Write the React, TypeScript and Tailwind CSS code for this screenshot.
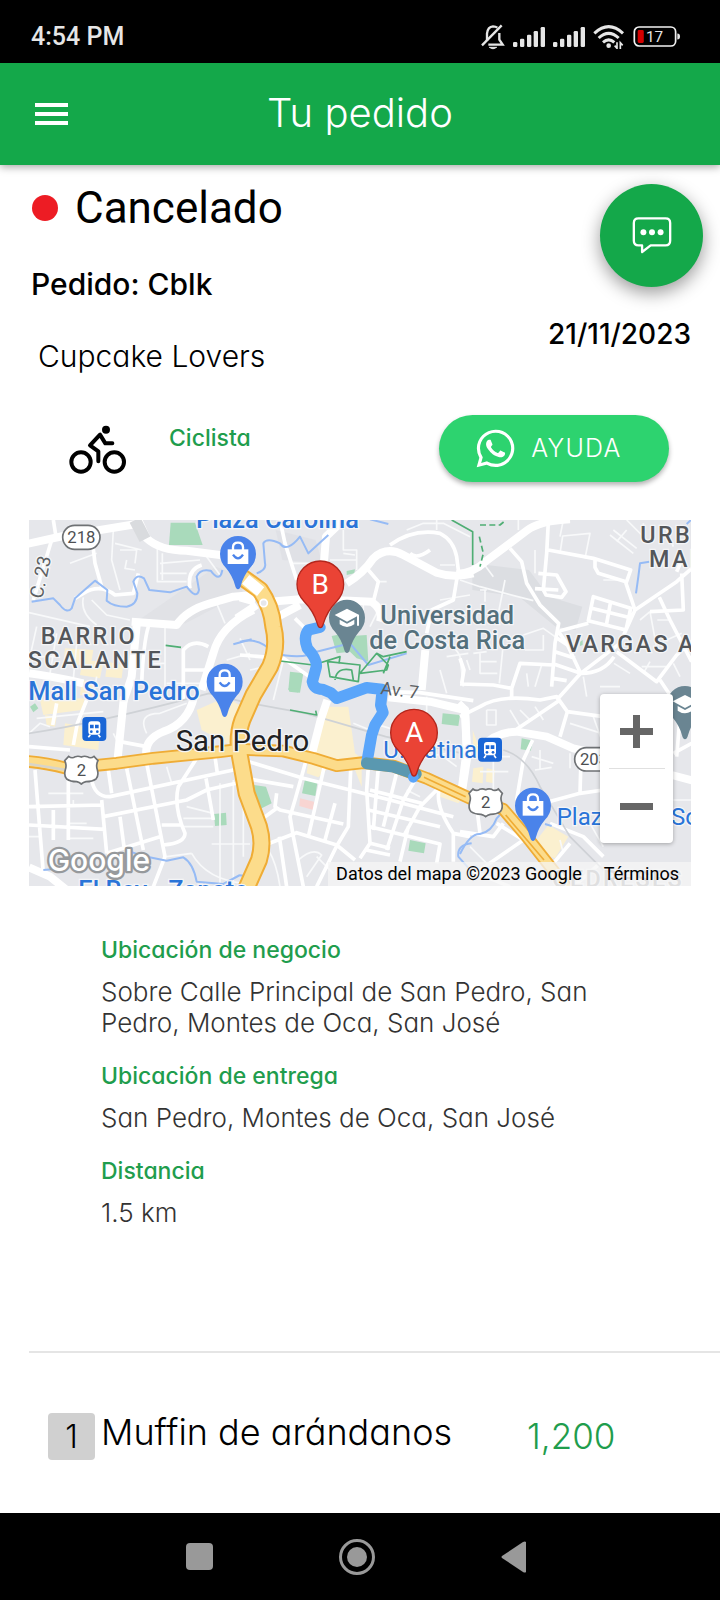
import React from "react";
import { IoLogoWhatsapp } from "react-icons/io5";

type Tile = {
  x: number;
  y: number;
  major: string;
  mid: string;
  minor: string;
  water: string;
  park: string;
  shops: string;
};

/* Street data of the map, split in six tiles. */
const tiles: Tile[] = [
  {
    x: -27,
    y: -30,
    major:
      "M20 102L130 78L240 60L350 42M355 30L380 85Q420 122 500 122L600 135L700 158M335 335L470 345Q500 300 570 280L640 260L700 255M700 300Q600 350 580 430L545 540M350 345L335 500L310 575M27 490Q100 500 190 520",
    mid: "M95 90L40 270M215 75L225 160L245 230M385 350Q370 400 365 520M490 570V420Q520 385 565 410M490 480H565M165 265L190 250Q240 220 285 255L340 250L355 190M510 235Q500 180 545 165M100 30L108 80",
    minor:
      "M280 60L275 150L300 240M300 120H350L345 160M285 100L365 120M320 150L315 175L345 180M412 110V215H500M427 130V210M420 160L540 150M420 190H500M560 140L600 195M190 262Q180 310 230 345M215 270Q245 300 260 315L330 330M27 308L210 350M150 160L230 130M435 350V560M385 460H435M440 520H540M590 280L615 340M660 385L690 450M50 350L30 440M110 370L90 490M27 440H120M170 400L155 560M230 500L220 560M620 450L690 430",
    water:
      "M35 275L100 265L120 285Q140 312 155 295L165 265L225 212L262 240L260 272Q280 290 320 290Q352 285 352 250L340 215Q350 190 372 205L388 240L450 247L500 230Q530 270 537 240L530 200Q540 175 572 182Q600 220 607 180M640 403L695 388",
    park: "M452 38L525 38L548 105L447 105Z",
    shops:
      "M135 415L220 420L212 470L130 458ZM188 450L250 455L240 505L180 495ZM262 455L310 465L305 505L256 500ZM330 420L365 420L350 470L325 465ZM185 510L225 520L220 560L180 555Z",
  },
  {
    x: 633,
    y: -30,
    major:
      "M310 30L258 80L250 180M320 220Q370 190 400 145Q440 108 490 135L590 188Q640 205 700 190M90 275L180 268Q260 270 395 275Q430 300 420 335M105 325L180 285M0 262L45 275M-10 325L50 285M556 420L545 540",
    mid: "M120 30L135 100L170 210M165 325L200 360M385 180L415 215L400 275M450 105Q520 55 600 70Q640 90 650 140L655 180L640 270L575 300L560 370M0 435L130 445L215 505M445 545L540 548L700 572M510 130Q530 150 570 120",
    minor:
      "M150 160H210M310 60V120H350V180M270 150H350M415 215H440M310 130L345 135M600 165H645M500 60L550 40H610L690 80M600 270L690 255M575 405Q640 390 660 440L670 530M620 440L685 430M600 480L620 550M130 450L100 570M410 310L390 350M590 60V30M30 480L80 470M370 280V330",
    water:
      "M50 190Q80 180 75 160L70 100Q80 82 120 100Q140 130 180 80L205 130L265 75M390 28L445 42M0 395Q60 380 100 430Q190 450 230 425L330 400L385 465L500 430",
    park: "M320 183L345 178L343 190L320 195ZM150 485L190 490L180 548L145 540ZM275 378L305 372L330 405L335 378L380 375L385 455L350 445L330 425L290 430Z",
    shops: "",
  },
  {
    x: 1293,
    y: -30,
    major: "M-10 192Q40 190 80 152L200 62Q240 32 330 28",
    mid: "M150 115L185 155L200 220L240 285L296 340L285 400L275 530M265 35L260 130L250 240L258 255L305 262L318 245L290 195L235 190M225 236L295 240M265 120L400 145L512 180L498 220L525 300L650 215L695 175M405 150V172L415 190L498 215M400 260L512 295L498 360L385 332ZM395 295L505 322M452 275L440 340M300 362L385 340M525 300L480 400L362 490L290 570M362 490L320 400L292 360M285 380L330 410M285 425L345 445M275 460L362 490M278 505L320 512M598 262L630 330L695 455M570 305L670 300L665 190M470 425L590 515L650 435L700 390M0 522L100 525L155 535L180 460L280 465M0 445L12 480L5 520M155 530V570M362 490Q430 490 462 440M600 510L640 570M650 185L665 150",
    minor:
      "M175 30V60M70 160L100 200M0 210L60 230L220 272M75 240V275M60 240H80M135 210L115 310M225 120V190M300 130L308 78L390 70L375 145M300 80L310 30M450 75L520 130M460 60L530 115M500 30L560 90M470 95L500 60M550 40V90M600 50V100M620 60L640 110M430 210H475M570 305L592 425M592 330H625M620 390L665 370M540 330L570 305M130 400L118 520M60 430V490H112M60 455H110M40 430L80 425M200 490L205 530M245 465L225 530M420 530H480M545 470H620M550 490L570 455M640 460L660 500M462 460L510 490M250 375V420H195M190 375L250 355L285 380M30 480L20 450M370 500L380 560",
    water: "M568 155L540 160L535 200L528 250M680 42L695 28",
    park: "M360 395L368 390L368 405L360 408Z",
    shops: "",
  },
  {
    x: -27,
    y: 510,
    major:
      "M312 20L292 215M380 200Q370 150 430 125Q505 100 522 20M27 532L90 560L140 600",
    mid: "M27 350L250 345M27 405L255 418M27 170L150 180M45 240L70 550M100 360V450M145 265V450M215 270Q225 322 270 320L640 240M250 380L500 330L560 300L690 270M265 240L275 310M245 330L260 490M320 235L370 480M380 220L435 500L400 590M300 380L312 470M260 490L420 440M530 205L475 290Q460 350 495 430Q495 460 430 465M425 405H485M585 200L592 250M558 265L580 390M160 165L172 100L200 30M110 40L98 105M300 155L380 170",
    minor:
      "M50 85L250 65M280 130L300 170M380 130Q350 70 420 70L500 40M85 310H190M150 400H200M600 280V580M640 270V590M490 385H580M490 410H580M515 490Q560 570 675 580M575 462H690M440 230L455 280M27 440H60M145 445H220M160 330V350M500 350L580 370M440 500L515 490M27 130L60 100L90 110",
    water:
      "M70 540L130 535M330 485L370 498L440 512L490 502Q520 520 530 575L610 582L660 555",
    park: "M30 50L45 40L55 55L40 67ZM582 372L618 368L620 405L585 408Z",
    shops:
      "M60 30L195 25L185 60L70 75ZM135 100L240 120L235 180L130 165ZM75 75L110 80L105 110L80 105ZM530 60L620 20L680 60L640 170L545 120Z",
  },
  {
    x: 633,
    y: 510,
    major: "M262 30L242 90L215 195M445 22L570 35L675 60L680 180L665 300",
    mid: "M10 210L190 265L450 330L640 380M0 262L160 290M200 205L165 330L150 380L160 440L190 590M255 220L205 440M332 240L325 410L290 468L230 590M110 310L105 350L120 360L310 402M55 395L110 355M75 465L170 428L290 465L345 510M285 340L255 450M385 230L380 300L390 460L360 505M415 230L400 420M472 240L430 410M390 300L545 340M385 360L600 410M525 270L490 330L440 480M390 410L600 462L590 520M600 290L540 350L490 440M600 290Q580 340 640 430V515M640 430L690 440M385 458L450 475M378 480L450 495M505 410L480 515M118 440L140 590",
    minor:
      "M30 150L110 170M400 100L600 160M560 200L620 190M85 480Q110 520 120 590M175 510Q220 470 245 495L200 560M230 500L280 550M10 300V500M500 300L540 320M560 20V80M610 200L650 230M340 100L390 120",
    water: "M695 460Q650 465 655 500L695 545M0 556L15 558",
    park: "M195 268L233 272L226 318L186 310ZM40 285L78 290L95 340L50 362ZM608 70L660 75L655 108L605 102ZM510 450L557 460L552 490L505 482ZM145 -5L180 -5L175 8L148 5Z",
    shops:
      "M265 50L325 50L345 190L365 205L365 290L345 240L300 240L220 195ZM205 210L270 230L235 262L200 250ZM555 245L680 310L655 340L600 320Z",
  },
  {
    x: 1293,
    y: 510,
    major:
      "M-5 40L15 60L22 200L5 310M60 175Q110 125 170 125L260 140L340 175L430 195M635 255L700 272",
    mid: "M0 80L60 50Q120 12 240 30L290 20L322 65L430 80M322 65L300 140M170 118L300 30M218 150L190 210L170 330M362 240L360 310L250 340M360 310L430 300M110 400L190 450M0 425L100 440L130 400M190 450L60 540M270 400L370 440L430 500M50 350L60 430M340 590L420 520M640 190L695 160M660 80L650 200M30 540L150 590M280 520L330 460",
    minor:
      "M100 200V320M60 200H150M60 245H145M215 200L280 220M225 240L275 232M240 180V240M400 80L425 150M330 100L425 130M80 60V105H108V60H80M150 60L180 110M225 50L250 90M30 470L80 520M300 450L310 490M390 400L430 470M640 330H695M180 60L210 90M120 150V200M330 190V235",
    water: "M0 492Q30 430 60 432Q95 425 110 385L135 358M255 402L275 408",
    park: "M185 145L220 152L212 182L182 178Z",
    shops:
      "M40 235L70 230L68 280L36 275ZM80 235L105 240L100 280L78 275ZM38 120L60 180L40 190ZM230 450L265 405L325 440L285 505L245 490ZM270 540L320 590L290 590Z",
  },
];

const northSouth =
  "M640 172L693 210Q728 260 733 320Q748 380 723 440L673 525L640 600Q622 650 633 710L653 820L690 920Q705 970 690 1020L650 1110";
const eastWest =
  "M-10 724Q50 728 113 745L263 730L373 715L573 695L633 688L763 693L853 715L923 737L1003 728L1093 738L1193 775L1323 835L1423 868L1493 950L1615 1105";

function Bag() {
  return (
    <g>
      <path d="M-31 -14H31V30H-31Z" fill="#fff" />
      <path d="M-15 -10V-20Q-15 -34 0 -34Q15 -34 15 -20V-10" fill="none" stroke="#fff" strokeWidth="7" />
      <path d="M-15 2Q0 24 15 2" fill="none" stroke="#4a83ea" strokeWidth="7" />
    </g>
  );
}

function Cap() {
  return (
    <g fill="#fff">
      <path d="M0 -27L37 -8L0 12L-37 -8Z" />
      <path d="M-22 6L0 18L22 6V20Q0 36 -22 20Z" />
      <path d="M30 -8H36V24H30Z" />
    </g>
  );
}

function PlacePin({ x, y, fill, children }: { x: number; y: number; fill: string; children: React.ReactNode }) {
  return (
    <g transform={`translate(${x} ${y})`}>
      <path
        d="M0 106Q-6 106 -9 94Q-16 66 -36 42Q-54 24 -54 0A54 54 0 0 1 54 0Q54 24 36 42Q16 66 9 94Q6 106 0 106Z"
        fill={fill}
      />
      {children}
    </g>
  );
}

function RedPin({ x, y, label }: { x: number; y: number; label: string }) {
  return (
    <g transform={`translate(${x} ${y})`}>
      <path
        d="M0 130Q-6 130 -9 118Q-20 80 -48 52Q-70 30 -70 0A70 70 0 0 1 70 0Q70 30 48 52Q20 80 9 118Q6 130 0 130Z"
        fill="#ea4335"
        stroke="#b3261c"
        strokeWidth="4"
      />
      <text y="29" textAnchor="middle" fontSize="84" fill="#fff">
        {label}
      </text>
    </g>
  );
}

function Station({ x, y }: { x: number; y: number }) {
  return (
    <g transform={`translate(${x} ${y})`}>
      <rect width="72" height="72" rx="12" fill="#1a66d6" />
      <rect x="18" y="13" width="36" height="40" rx="9" fill="#fff" />
      <path d="M23 23H34V34H23ZM38 23H49V34H38Z" fill="#1a66d6" />
      <circle cx="27" cy="44" r="4" fill="#1a66d6" />
      <circle cx="45" cy="44" r="4" fill="#1a66d6" />
      <path d="M24 53L18 61M48 53L54 61" stroke="#fff" strokeWidth="5" />
    </g>
  );
}

function RouteShield({ x, y }: { x: number; y: number }) {
  return (
    <g transform={`translate(${x} ${y})`}>
      <path
        d="M14 2Q24 10 34 3Q43 0 52 4Q61 0 70 3Q80 10 90 2L102 15Q95 28 100 42Q105 60 96 70Q85 78 66 78Q58 80 52 85Q46 80 38 78Q19 78 8 70Q-1 60 4 42Q9 28 2 15Z"
        fill="#fff"
        stroke="#6f7275"
        strokeWidth="5"
      />
      <text x="52" y="60" textAnchor="middle" fontSize="50" fill="#4d4f52">
        2
      </text>
    </g>
  );
}

function MapDrawing() {
  const halo = { stroke: "#f4f5f7", strokeWidth: 8, paintOrder: "stroke" } as const;
  return (
    <svg
      viewBox="0 0 1986 1098"
      preserveAspectRatio="xMidYMid slice"
      role="img"
      aria-label="Mapa de la ruta en San Pedro"
      className="block h-full w-full font-[Roboto,sans-serif]"
    >
      <rect width="1986" height="1098" fill="#e6e7eb" />
      <g fill="#dcdee2">
        <path d="M1330 130L1500 150L1560 230L1660 260L1640 330L1580 320L1470 230L1330 210Z" />
        <path d="M740 30L860 60L880 130L760 120Z" opacity=".6" />
        <path d="M560 140L640 170L640 220L470 310L330 300Z" opacity=".5" />
      </g>
      {tiles.map((t, i) => (
        <g key={i} transform={`translate(${t.x} ${t.y})`}>
          <path d={t.shops} fill="#fbf0cf" />
          <path d={t.park} fill="#a9dabb" />
        </g>
      ))}
      <path d="M813 835L855 845L853 870L811 858Z" fill="#f8d5d2" />
      {tiles.map((t, i) => (
        <g key={i} transform={`translate(${t.x} ${t.y})`} fill="none" stroke="#fff" strokeLinejoin="round">
          <path d={t.minor} strokeWidth="5" stroke="#f8f9fa" />
          <path d={t.mid} strokeWidth="11" />
        </g>
      ))}
      <g fill="none" stroke="#cfd2d6" strokeWidth="5">
        <path d="M0 640Q200 610 540 520L640 545L830 580L1070 650L1300 700" />
        <path d="M1423 690Q1493 710 1533 800L1623 950L1743 1070" />
      </g>
      {tiles.map((t, i) => (
        <g key={i} transform={`translate(${t.x} ${t.y})`} fill="none" strokeLinejoin="round">
          <path d={t.major} strokeWidth="24" stroke="#fff" />
          <path d={t.water} strokeWidth="6" stroke="#96bbf5" />
        </g>
      ))}
      <path d="M318 0L348 58" stroke="#d9dbde" strokeWidth="36" />
      <g fill="none" stroke="#4fae74" strokeWidth="5" strokeLinejoin="round">
        <path d="M410 376L456 382M753 423L853 435L933 410L930 430" />
        <path d="M895 420L903 470L988 485L993 435L898 425M918 480Q923 440 968 450L973 480M993 460L1073 450L1078 435L1043 400L993 460M1043 400L1063 410L1133 395M1063 460L1083 410" />
        <path d="M1268 0L1331 35V135M783 570L863 585L860 572" />
        <path d="M1353 15H1413L1431 0M1351 50L1363 100L1353 140" strokeDasharray="18 10" />
      </g>
      <g fill="none" strokeLinejoin="round">
        <path d={northSouth} stroke="#efac35" strokeWidth="54" />
        <path d={eastWest} stroke="#efac35" strokeWidth="38" />
        <path d={northSouth} stroke="#fcdc8b" strokeWidth="42" />
        <path d={eastWest} stroke="#fcdc8b" strokeWidth="27" />
        <path d="M650 178L695 215" stroke="#fff" strokeWidth="34" />
        <path d="M0 732L113 750" stroke="#d8d4c8" strokeWidth="8" />
        <path d="M1185 772L1310 830M1430 885L1545 1020" stroke="#efac35" strokeWidth="5" />
        <circle cx="704" cy="249" r="11" fill="#e6e7eb" stroke="#fff" strokeWidth="5" />
      </g>
      <g fill="none" strokeLinejoin="round" strokeLinecap="round">
        <path
          d="M873 322L838 330Q822 350 835 385Q864 415 862 440L850 485Q855 508 880 508L905 518L923 535L1013 503L1060 508L1055 555L1062 578L1038 615L1028 645L1014 725"
          stroke="#5aa5fa"
          strokeWidth="34"
        />
        <path d="M1014 730L1093 740L1160 762" stroke="#5a98b0" strokeWidth="36" />
        <circle cx="1153" cy="772" r="10" fill="#5aa5fa" stroke="#5aa5fa" strokeWidth="12" />
      </g>

      <g fontSize="70" fill="#53565a" className="font-medium tracking-widest" {...halo}>
        <text x="35" y="372">BARRIO</text>
        <text x="-4" y="444">SCALANTE</text>
        <text x="1611" y="395">VARGAS ARAYA</text>
        <text x="1834" y="68">URB.</text>
        <text x="1860" y="140">MARÍA</text>
        <text x="1570" y="1100" fill="#9a9c9f">CEDRESES</text>
      </g>
      <g fontSize="76" fill="#2a74d8" className="font-medium" {...halo}>
        <text x="501" y="24">Plaza Carolina</text>
        <text x="-2" y="540">Mall San Pedro</text>
        <text x="148" y="1137">El Rey - Zapote</text>
      </g>
      <g fontSize="72" fill="#2a74d8" {...halo}>
        <text x="1063" y="715">U. Latina</text>
        <text x="1583" y="914">Plaza del</text>
        <text x="1926" y="914">Sol</text>
      </g>
      <g fontSize="76" fill="#54707c" className="font-medium" {...halo}>
        <text x="1054" y="311">Universidad</text>
        <text x="1021" y="388">de Costa Rica</text>
      </g>
      <text x="440" y="692" fontSize="88" fill="#202124" {...halo}>
        San Pedro
      </text>
      <text fontSize="56" fill="#5c5f62" transform="translate(40 238) rotate(-78)" {...halo}>
        C. 23
      </text>
      <text fontSize="54" fill="#5c5f62" transform="translate(1053 522) rotate(7)">
        Av. 7
      </text>
      <g fill="#fff" stroke="#6f7275" strokeWidth="5">
        <rect x="101" y="16" width="112" height="72" rx="36" />
        <rect x="1637" y="683" width="112" height="70" rx="35" />
      </g>
      <g fontSize="50" fill="#4d4f52" textAnchor="middle">
        <text x="157" y="70">218</text>
        <text x="1695" y="736">203</text>
      </g>
      <RouteShield x={105} y={707} />
      <RouteShield x={1318} y={805} />
      <Station x={160} y={591} />
      <Station x={1347} y={653} />
      <PlacePin x={627} y={102} fill="#4a83ea"><Bag /></PlacePin>
      <PlacePin x={587} y={485} fill="#4a83ea"><Bag /></PlacePin>
      <PlacePin x={1512} y={857} fill="#4a83ea"><Bag /></PlacePin>
      <PlacePin x={954} y={293} fill="#6a8592"><Cap /></PlacePin>
      <PlacePin x={1968} y={552} fill="#6a8592"><Cap /></PlacePin>
      <RedPin x={874} y={193} label="B" />
      <RedPin x={1155} y={638} label="A" />
      <text
        x="56"
        y="1053"
        fontSize="90"
        fill="#fff"
        stroke="#96999c"
        strokeWidth="14"
        paintOrder="stroke"
        strokeLinejoin="round"
        className="font-[Inter,sans-serif] font-medium"
      >
        Google
      </text>
    </svg>
  );
}

function Signal() {
  return (
    <svg viewBox="0 0 96 60" className="h-5 w-8" fill="#e6e6e6" aria-hidden="true">
      <rect y="45" width="13" height="15" rx="4" />
      <rect x="21" y="35" width="13" height="25" rx="4" />
      <rect x="42" y="23" width="13" height="37" rx="4" />
      <rect x="62" y="12" width="13" height="48" rx="4" />
      <rect x="83" width="13" height="60" rx="4" />
    </svg>
  );
}

function StatusBar() {
  return (
    <div className="flex h-[63px] items-center justify-between bg-black pt-[10px] pr-[39px] pl-[31px]">
      <span className="font-[Roboto,sans-serif] text-[25px] leading-8 font-medium text-[#e6e6e6]">4:54 PM</span>
      <div className="flex items-center gap-2">
        <svg viewBox="0 0 72 80" className="h-7 w-6" fill="none" stroke="#e6e6e6" strokeWidth="7" aria-hidden="true">
          <path d="M18 52V30Q20 9 36 8Q44 8 49 12M55 28V48L65 63H22" />
          <path d="M3 65L62 5" />
          <path d="M25 71Q36 80 47 71Z" fill="#e6e6e6" strokeWidth="3" />
        </svg>
        <Signal />
        <Signal />
        <svg viewBox="0 0 96 72" className="h-6 w-8" fill="none" stroke="#e6e6e6" strokeWidth="9" aria-hidden="true">
          <path d="M4 25Q47 -15 90 25" />
          <path d="M17 39Q47 11 77 39" />
          <path d="M30 52Q47 37 64 52" />
          <circle cx="47" cy="62" r="7" fill="#e6e6e6" stroke="none" />
          <path d="M72 52V70L65 62M82 72V53L89 61" strokeWidth="5" />
        </svg>
        <svg viewBox="0 0 140 62" className="h-[21px] w-12" aria-label="Batería 17">
          <rect x="3" y="3" width="122" height="56" rx="14" fill="none" stroke="#f2f2f2" strokeWidth="5" />
          <rect x="13" y="12" width="18" height="38" rx="4" fill="#d40000" />
          <path d="M130 22Q138 22 138 31Q138 40 130 40Z" fill="#e6e6e6" />
          <text x="63" y="47" textAnchor="middle" fontSize="45" fill="#e6e6e6" className="font-[Roboto,sans-serif]">
            17
          </text>
        </svg>
      </div>
    </div>
  );
}

function Detail({ label, children }: { label: string; children: React.ReactNode }) {
  return (
    <div className="mb-[23px]">
      <dt className="text-[23px] leading-[31px] font-medium text-[#1f9d4d]">{label}</dt>
      <dd className="mt-[10px] text-[26px] leading-[31px] font-light text-[#333]">{children}</dd>
    </div>
  );
}

export default function App() {
  return (
    <div className="flex min-h-screen flex-col bg-white font-[Inter,sans-serif] text-black [font-feature-settings:'cv11']">
      <StatusBar />
      <header className="relative z-10 grid h-[102px] grid-cols-[1fr_auto_1fr] items-center bg-[#14a84a] px-[35px] text-white shadow-[0_2px_8px_rgba(0,0,0,0.35)]">
        <button type="button" aria-label="Menú" className="flex w-[33px] flex-col gap-[5px]">
          <span className="h-1 bg-white" />
          <span className="h-1 bg-white" />
          <span className="h-1 bg-white" />
        </button>
        <h1 className="pb-[2px] text-[40px] font-light">Tu pedido</h1>
      </header>

      <main className="relative flex-1">
        <button
          type="button"
          aria-label="Chat"
          className="absolute top-[19px] right-[17px] flex size-[103px] items-center justify-center rounded-full bg-[#14a84a] shadow-[0_6px_18px_rgba(0,0,0,0.4)]"
        >
          <svg viewBox="0 0 120 112" className="h-[37px] w-10" fill="none" stroke="#fff" strokeWidth="7" strokeLinejoin="round" aria-hidden="true">
            <path d="M19 4H101Q115 4 115 18V72Q115 86 101 86H56L30 106V86H19Q5 86 5 72V18Q5 4 19 4Z" />
            <g fill="#fff" stroke="none">
              <circle cx="34" cy="46" r="9" />
              <circle cx="60" cy="46" r="9" />
              <circle cx="86" cy="46" r="9" />
            </g>
          </svg>
        </button>

        <section className="px-[29px] pt-[15px]">
          <h2 className="flex items-center gap-[17px] pl-[3px] font-[Roboto,sans-serif] text-[44px] leading-[56px]">
            <span className="size-[26px] rounded-full bg-[#ed1c24]" />
            Cancelado
          </h2>
          <div className="mt-6 flex justify-between">
            <div>
              <p className="pl-[2px] text-[30px] leading-[48px] font-medium">Pedido: Cblk</p>
              <p className="mt-6 pl-[9px] text-[30px] leading-[48px] font-light">Cupcake Lovers</p>
            </div>
            <p className="pt-[50px] text-[28px] leading-[48px] font-medium">21/11/2023</p>
          </div>
          <div className="mt-[35px] flex items-start pr-[22px] pl-10">
            <svg viewBox="0 0 174 152" className="mt-2 h-[52px] w-[58px]" fill="none" stroke="#000" strokeWidth="12" strokeLinejoin="round" strokeLinecap="round" aria-label="Bicicleta">
              <circle cx="36" cy="115" r="29" />
              <circle cx="136" cy="115" r="29" />
              <circle cx="111" cy="18" r="12" fill="#000" stroke="none" />
              <path d="M130 59H109L93 33L63 65L88 83V113" />
            </svg>
            <p className="mt-2 ml-[42px] flex-1 text-[23px] leading-[31px] font-medium text-[#1f9d4d]">Ciclista</p>
            <a
              href="#ayuda"
              className="flex h-[67px] w-[230px] items-center justify-center gap-[14px] rounded-full bg-[#2dd36f] pr-3 text-[25px] font-light tracking-wider text-white shadow-[0_3px_5px_rgba(0,0,0,0.3)]"
            >
              <IoLogoWhatsapp className="size-[43px]" aria-hidden="true" />
              AYUDA
            </a>
          </div>
        </section>

        <section className="relative mx-[29px] mt-[38px] h-[366px] overflow-hidden">
          <MapDrawing />
          <div className="absolute right-0 bottom-0 flex h-6 items-center gap-[22px] bg-[#f5f5f5]/75 pr-3 pl-2 font-[Roboto,sans-serif] text-lg">
            <span>Datos del mapa ©2023 Google</span>
            <a href="#terminos">Términos</a>
          </div>
          <div className="absolute right-[18px] bottom-[43px] flex w-[73px] flex-col items-center rounded-sm bg-white shadow-[0_1px_4px_rgba(0,0,0,0.3)]">
            <button type="button" aria-label="Acercar" className="flex h-[74px] w-full items-center justify-center">
              <svg viewBox="0 0 33 33" className="size-[33px]" fill="#666" aria-hidden="true">
                <path d="M13 0H20V13H33V20H20V33H13V20H0V13H13Z" />
              </svg>
            </button>
            <span className="h-px w-14 bg-[#e0e0e0]" />
            <button type="button" aria-label="Alejar" className="flex h-[74px] w-full items-center justify-center">
              <span className="h-[7px] w-[33px] bg-[#666]" />
            </button>
          </div>
        </section>

        <dl className="mt-[49px] pr-[100px] pl-[101px]">
          <Detail label="Ubicación de negocio">Sobre Calle Principal de San Pedro, San Pedro, Montes de Oca, San José</Detail>
          <Detail label="Ubicación de entrega">San Pedro, Montes de Oca, San José</Detail>
          <Detail label="Distancia">1.5 km</Detail>
        </dl>

        <section className="mt-[123px] ml-[29px] flex items-start border-t-2 border-[#e5e5e5] pt-[60px] pl-[19px]">
          <span className="flex size-[47px] items-center justify-center rounded-[4px] bg-[#d0d0d0] text-[32px] font-light">1</span>
          <p className="w-[432px] pl-[6px] text-[36px] leading-[38px] font-light">Muffin de arándanos</p>
          <p className="text-[35px] leading-[46px] font-light text-[#1f9d4d]">1,200</p>
        </section>
      </main>

      <nav aria-label="Sistema" className="flex h-[87px] items-center justify-center gap-[126px] bg-black pr-[7px]">
        <button type="button" aria-label="Recientes" className="size-[27px] rounded-[4px] bg-[#999]" />
        <button type="button" aria-label="Inicio" className="flex size-9 items-center justify-center rounded-full border-3 border-[#999]">
          <span className="size-5 rounded-full bg-[#999]" />
        </button>
        <button type="button" aria-label="Atrás">
          <svg viewBox="0 0 26 32" className="h-8 w-[26px]" fill="#999" aria-hidden="true">
            <path d="M25 1V31Q24 32 22 31L1 17Q0 16 1 15L22 1Q24 0 25 1Z" />
          </svg>
        </button>
      </nav>
    </div>
  );
}
